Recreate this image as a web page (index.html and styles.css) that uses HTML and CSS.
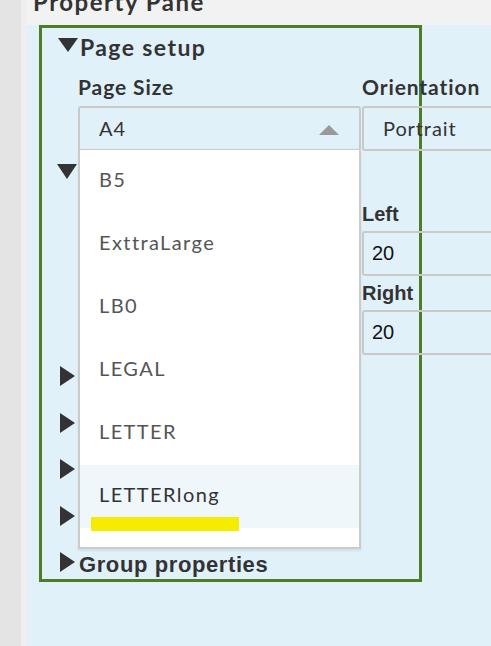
FILE: index.html
```html
<!DOCTYPE html>
<html>
<head>
<meta charset="utf-8">
<link rel="stylesheet" href="styles.css">
</head>
<body>
<div class="app">
  <div class="rail"></div>
  <div class="rail2"></div>
  <div class="pane">
    <div class="pane-title"><span class="pane-title-text">Property Pane</span></div>
    <div class="pane-body">
      <div class="frame">
        <div class="section">
          <div class="sec-head first">
            <span class="tri-down big"></span>
            <span class="sec-title q">Page setup</span>
          </div>
          <div class="grid page-grid">
            <div class="field">
              <div class="label q">Page Size</div>
              <div class="select-wrap">
                <div class="select q">A4<span class="caret-up"></span></div>
                <ul class="dropdown q">
                  <li class="item">B5</li>
                  <li class="item">ExttraLarge</li>
                  <li class="item">LB0</li>
                  <li class="item">LEGAL</li>
                  <li class="item">LETTER</li>
                  <li class="item hover">LETTERlong</li>
                </ul>
                <span class="marker"></span>
              </div>
            </div>
            <div class="field">
              <div class="label q">Orientation</div>
              <div class="select q">Portrait</div>
            </div>
          </div>
        </div>

        <div class="section">
          <div class="sec-head" aria-label="Margin">
            <span class="tri-down"></span>
          </div>
          <div class="grid margin-grid">
            <div class="mfield"><div class="mlabel"></div><div class="input"></div></div>
            <div class="mfield"><div class="mlabel">Left</div><div class="input">20</div></div>
            <div class="mfield"><div class="mlabel"></div><div class="input"></div></div>
            <div class="mfield"><div class="mlabel">Right</div><div class="input">20</div></div>
          </div>
        </div>

        <div class="collapsed first-c" aria-label="Header"><span class="tri-right"></span></div>
        <div class="collapsed" aria-label="Footer"><span class="tri-right"></span></div>
        <div class="collapsed" aria-label="Watermark"><span class="tri-right"></span></div>
        <div class="collapsed" aria-label="Background"><span class="tri-right"></span></div>
        <div class="collapsed"><span class="tri-right"></span><span class="sec-title a">Group properties</span></div>
      </div>
    </div>
  </div>
</div>
</body>
</html>
```

FILE: styles.css
```css
html, body {
  margin: 0;
  padding: 0;
  overflow: hidden;
  width: 491px;
  height: 646px;
}

.app {
  display: flex;
  width: 491px;
  height: 646px;
  overflow: hidden;
  color: #333;
}

.rail {
  width: 21px;
  flex: none;
  background: #e4e4e4;
}

.rail2 {
  width: 6px;
  flex: none;
  background: #efefef;
}

.pane {
  flex: 1;
  min-width: 0;
  background: #e1f1fa;
  overflow: hidden;
}

.pane-title {
  height: 25px;
  background: #f2f2f2;
  overflow: hidden;
  padding-left: 6px;
}

.pane-title-text {
  display: block;
  font-family: Lato, sans-serif;
  font-weight: 700;
  font-size: 24px;
  line-height: 24px;
  letter-spacing: 1.5px;
  margin-top: -10px;
  color: #333;
}

.pane-body {
  padding-left: 12px;
}

.frame {
  width: 377px;
  border: 3px solid #4e7d28;
}

.q {
  font-family: Lato, sans-serif;
}

.a {
  font-family: "Liberation Sans", Arial, sans-serif;
  font-weight: 700;
}

.sec-head {
  height: 37px;
  box-sizing: border-box;
  padding-top: 10px;
  padding-left: 15px;
  display: flex;
  align-items: flex-start;
  margin-top: 3px;
}

.sec-head.first {
  margin-top: 0;
  padding-left: 16px;
}

.tri-down {
  width: 0;
  height: 0;
  border-left: 10px solid transparent;
  border-right: 10px solid transparent;
  border-top: 15px solid #333;
  flex: none;
}

.tri-down.big {
  border-top-width: 14px;
}

.sec-title {
  margin-left: 2px;
  font-size: 21px;
  line-height: 22px;
  margin-top: -1px;
  white-space: nowrap;
}

.sec-title.q {
  font-weight: 700;
  font-size: 23px;
  letter-spacing: 1.4px;
  margin-top: -2px;
}

.grid {
  display: grid;
  grid-template-columns: 283px 283px;
  column-gap: 1px;
  padding-left: 36px;
}

.label {
  font-weight: 700;
  font-size: 21px;
  line-height: 24px;
  letter-spacing: 0.9px;
  margin-top: 10px;
  margin-bottom: 7px;
  white-space: nowrap;
}

.select-wrap {
  position: relative;
}

.select {
  position: relative;
  height: 45px;
  box-sizing: border-box;
  border: 2px solid #c9c9c9;
  border-radius: 3px;
  padding-left: 19px;
  font-size: 20px;
  line-height: 41px;
  letter-spacing: 0.9px;
  color: #333;
}

.caret-up {
  position: absolute;
  right: 20px;
  top: 17px;
  width: 0;
  height: 0;
  border-left: 10px solid transparent;
  border-right: 10px solid transparent;
  border-bottom: 10px solid #999;
}

.dropdown {
  position: absolute;
  left: 0;
  top: 44px;
  z-index: 5;
  width: 283px;
  box-sizing: border-box;
  margin: 0;
  padding: 0 0 19px 0;
  list-style: none;
  background: #fff;
  border: 2px solid #cbcbcb;
  border-top: 0;
  box-shadow: 0 2px 2px rgba(120, 130, 140, 0.15);
}

.item {
  height: 63px;
  box-sizing: border-box;
  line-height: 59px;
  padding-bottom: 5px;
  padding-left: 19px;
  font-size: 20px;
  letter-spacing: 1.4px;
  color: #555;
}

.item.hover {
  background: #eff7fb;
  color: #333;
}

.marker {
  position: absolute;
  z-index: 6;
  left: 13px;
  top: 411px;
  width: 148px;
  height: 14px;
  background: #f5ec00;
}

.margin-grid {
  padding-top: 6px;
}

.mlabel {
  font-family: "Liberation Sans", Arial, sans-serif;
  font-weight: 700;
  font-size: 20px;
  line-height: 34px;
  height: 34px;
  white-space: nowrap;
}

.input {
  height: 45px;
  box-sizing: border-box;
  border: 2px solid #c9c9c9;
  border-radius: 3px;
  padding-left: 8px;
  font-family: "Liberation Sans", Arial, sans-serif;
  font-size: 20px;
  line-height: 41px;
  color: #111;
}

.collapsed {
  height: 37px;
  box-sizing: border-box;
  padding-top: 10px;
  padding-left: 18px;
  display: flex;
  align-items: flex-start;
  margin-top: 9.5px;
}

.collapsed.first-c {
  margin-top: 1px;
}

.tri-right {
  width: 0;
  height: 0;
  border-top: 10.5px solid transparent;
  border-bottom: 10.5px solid transparent;
  border-left: 15px solid #333;
  flex: none;
}

.collapsed .sec-title {
  margin-left: 4px;
  font-size: 22px;
  line-height: 22px;
  letter-spacing: 0.6px;
  margin-top: 2px;
}
```
